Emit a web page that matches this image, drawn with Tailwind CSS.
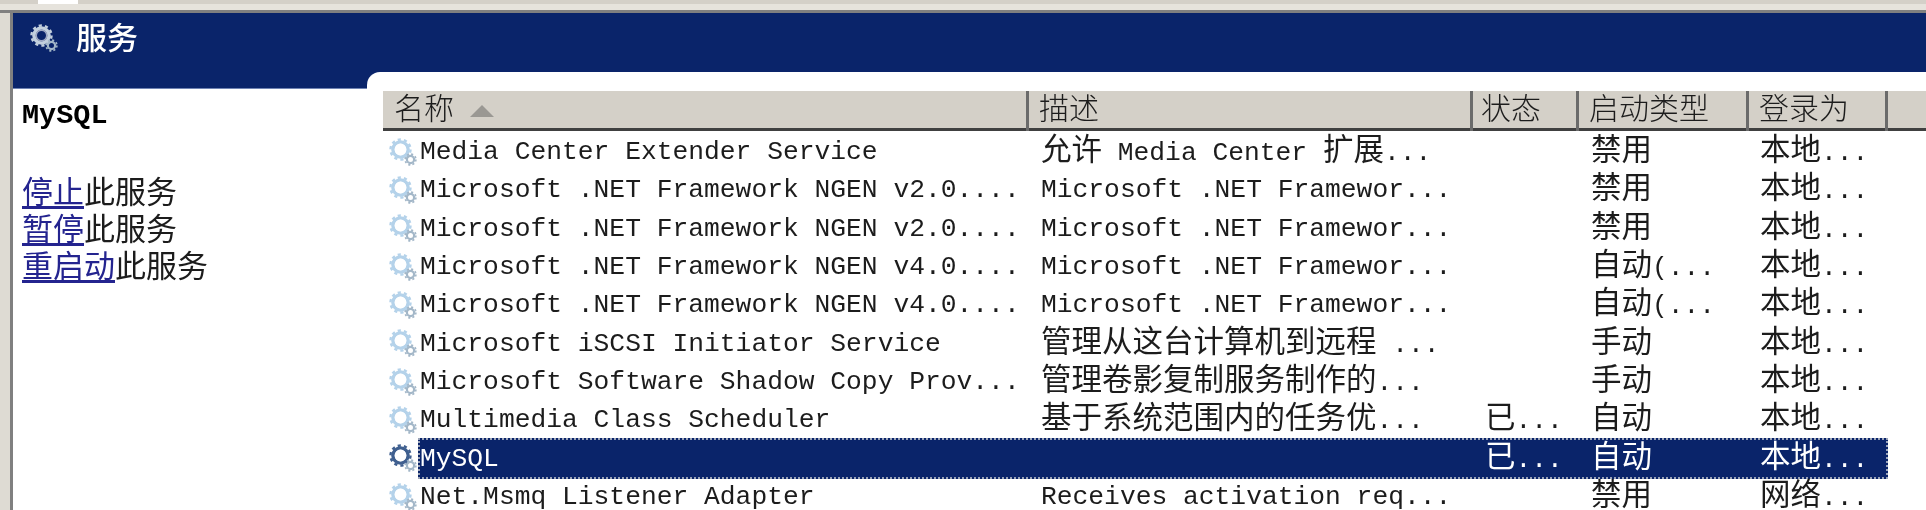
<!DOCTYPE html>
<html lang="zh-CN">
<head>
  <meta charset="UTF-8" />
  <title>服务</title>
  <script src="https://cdn.jsdelivr.net/npm/@tailwindcss/browser@4"></script>
</head>
<body class="h-[510px] w-[1926px] overflow-hidden bg-[#d4d0c8] font-['Liberation_Mono','Noto_Sans_CJK_SC',monospace] text-[26.3px] text-[#1c1c1c] blur-[0.45px]">
  <svg class="hidden">
    <symbol id="gears" viewBox="0 0 28 28">
      <circle cx="11.5" cy="11.5" r="7.6" fill="none" stroke="currentColor" stroke-width="3.4"/>
      <circle cx="11.5" cy="11.5" r="10" fill="none" stroke="currentColor" stroke-width="2.4" stroke-dasharray="3.2 3.08"/>
      <circle cx="11.5" cy="11.5" r="5.2" fill="none" stroke="#ffffff" stroke-opacity="0.6" stroke-width="1.4"/>
      <circle cx="21.5" cy="21.5" r="3.6" fill="none" stroke="#a3b7c8" stroke-width="2.2"/>
      <circle cx="21.5" cy="21.5" r="5.4" fill="none" stroke="#a3b7c8" stroke-width="1.6" stroke-dasharray="2.1 2.14"/>
    </symbol>
  </svg>

  <!-- window chrome -->
  <div class="flex h-[4px] pl-[38px]"><div class="w-[40px] bg-white"></div></div>
  <div class="h-[9px] border-b-[3px] border-[#808080] bg-[#e6e3dc]"></div>

  <div class="flex h-[497px]">
    <div class="w-[13px] shrink-0 border-r-[3px] border-[#808080] bg-[#dedbd3]"></div>

    <div class="relative min-w-0 flex-1 bg-white">
      <header class="flex h-[76px] items-start gap-[18px] border-b border-[#6f83b3] bg-[#0a246a] pl-[17px] pt-[10px] text-white">
        <svg class="mt-[1px] size-[28px] text-[#c3d0de]"><use href="#gears"/></svg>
        <h1 class="mt-[1px] text-[31px] leading-[34px] font-medium">服务</h1>
      </header>
      <div class="absolute left-[354px] right-0 top-[59px] h-[18px] rounded-tl-[13px] bg-white"></div>

      <div class="flex">
        <aside class="w-[370px] shrink-0 pl-[9px]">
          <h2 class="mt-[9px] text-[28.5px] leading-[36px] font-bold text-black">MySQL</h2>
          <ul class="mt-[42px] text-[31px] leading-[37px]">
            <li><a class="text-[#24248f] underline underline-offset-[3px]">停止</a>此服务</li>
            <li><a class="text-[#24248f] underline underline-offset-[3px]">暂停</a>此服务</li>
            <li><a class="text-[#24248f] underline underline-offset-[3px]">重启动</a>此服务</li>
          </ul>
        </aside>

        <main class="min-w-0 flex-1">
          <div class="mt-[2px] grid h-[40px] grid-cols-[643px_444px_106px_170px_139px_1fr] border-b-[3px] border-[#404040] bg-[#d4d0c8] text-[30px] leading-[40px] font-light">
            <div class="flex items-center gap-[16px] pl-[11px]">名称 <span class="h-0 w-0 border-x-[12px] border-b-[12px] border-x-transparent border-b-[#9a9893]"></span></div>
            <div class="border-l-[3px] border-[#6b6b6b] pl-[10px]">描述</div>
            <div class="border-l-[3px] border-[#6b6b6b] pl-[8px]">状态</div>
            <div class="border-l-[3px] border-[#6b6b6b] pl-[10px]">启动类型</div>
            <div class="border-l-[3px] border-[#6b6b6b] pl-[10px]">登录为</div>
            <div class="border-l-[3px] border-[#6b6b6b]"></div>
          </div>
          <div id="rows"></div>
        </main>
      </div>
    </div>
  </div>

  <script>
    const rows = [
      ["Media Center Extender Service", "允许 Media Center 扩展...", "", "禁用", "本地..."],
      ["Microsoft .NET Framework NGEN v2.0....", "Microsoft .NET Framewor...", "", "禁用", "本地..."],
      ["Microsoft .NET Framework NGEN v2.0....", "Microsoft .NET Framewor...", "", "禁用", "本地..."],
      ["Microsoft .NET Framework NGEN v4.0....", "Microsoft .NET Framewor...", "", "自动(...", "本地..."],
      ["Microsoft .NET Framework NGEN v4.0....", "Microsoft .NET Framewor...", "", "自动(...", "本地..."],
      ["Microsoft iSCSI Initiator Service", "管理从这台计算机到远程 ...", "", "手动", "本地..."],
      ["Microsoft Software Shadow Copy Prov...", "管理卷影复制服务制作的...", "", "手动", "本地..."],
      ["Multimedia Class Scheduler", "基于系统范围内的任务优...", "已...", "自动", "本地..."],
      ["MySQL", "", "已...", "自动", "本地...", true],
      ["Net.Msmq Listener Adapter", "Receives activation req...", "", "禁用", "网络..."],
    ];

    // CJK glyphs are twice the width of the monospace latin ones
    const wide = s => s.replace(/[\u4e00-\u9fff]+/g, m => `<span class="text-[30.5px]">${m}</span>`);

    document.getElementById("rows").innerHTML = rows.map(([name, desc, status, start, login, selected]) => `
      <div class="grid h-[38.35px] grid-cols-[35px_611px_444px_106px_170px_139px] items-center leading-[38px] whitespace-pre">
        <svg class="ml-[6px] size-[28px] ${selected ? "text-[#3f5f8f]" : "text-[#b4d2ea]"}"><use href="#gears"/></svg>
        <div class="col-span-5 grid h-full grid-cols-subgrid pt-[2px] ${selected ? "bg-[#0a246a] text-white outline-2 -outline-offset-2 outline-dotted outline-[#9aa3b8]" : ""}">
          <div class="pl-[2px]">${name}</div>
          <div class="pl-[12px]">${wide(desc)}</div>
          <div class="pl-[12px]">${wide(status)}</div>
          <div class="pl-[12px]">${wide(start)}</div>
          <div class="pl-[11px]">${wide(login)}</div>
        </div>
      </div>`).join("");
  </script>
</body>
</html>
